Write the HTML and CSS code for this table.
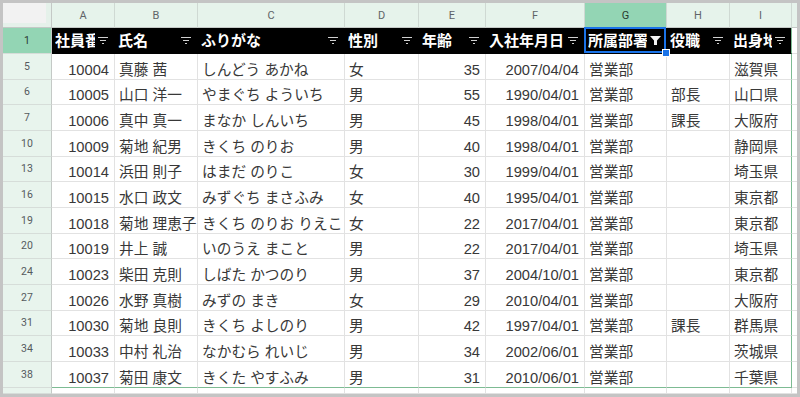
FILE: index.html
```html
<!DOCTYPE html>
<html lang="ja">
<head>
<meta charset="utf-8">
<title>Sheet</title>
<link rel="stylesheet" href="styles.css">
</head>
<body>
<div class="frame">
<div class="sheet">
  <div class="corner"><div class="corner-in"></div></div>
  <div class="ch">A</div><div class="ch">B</div><div class="ch">C</div><div class="ch">D</div><div class="ch">E</div><div class="ch">F</div><div class="ch sel">G</div><div class="ch">H</div><div class="ch">I</div><div class="ch end"></div>

  <div class="rh sel">1</div>
  <div class="hd"><span class="ht">社員番号</span><svg class="fi" width="10" height="7" viewBox="0 0 10 7"><path d="M0 .5h10M2 3.5h6M4 6.5h2" stroke="#d0d0d0" stroke-width="1"/></svg></div>
  <div class="hd"><span class="ht">氏名</span><svg class="fi" width="10" height="7" viewBox="0 0 10 7"><path d="M0 .5h10M2 3.5h6M4 6.5h2" stroke="#d0d0d0" stroke-width="1"/></svg></div>
  <div class="hd"><span class="ht">ふりがな</span><svg class="fi" width="10" height="7" viewBox="0 0 10 7"><path d="M0 .5h10M2 3.5h6M4 6.5h2" stroke="#d0d0d0" stroke-width="1"/></svg></div>
  <div class="hd"><span class="ht">性別</span><svg class="fi" width="10" height="7" viewBox="0 0 10 7"><path d="M0 .5h10M2 3.5h6M4 6.5h2" stroke="#d0d0d0" stroke-width="1"/></svg></div>
  <div class="hd"><span class="ht">年齢</span><svg class="fi" width="10" height="7" viewBox="0 0 10 7"><path d="M0 .5h10M2 3.5h6M4 6.5h2" stroke="#d0d0d0" stroke-width="1"/></svg></div>
  <div class="hd"><span class="ht">入社年月日</span><svg class="fi" width="10" height="7" viewBox="0 0 10 7"><path d="M0 .5h10M2 3.5h6M4 6.5h2" stroke="#d0d0d0" stroke-width="1"/></svg></div>
  <div class="hd active"><span class="ht">所属部署</span><svg class="ff" width="11" height="9" viewBox="0 0 11 9"><path d="M0 0h11L7 4.5V9H4V4.5Z" fill="#f2f2f2"/></svg><span class="selbox"></span><span class="handle"></span></div>
  <div class="hd"><span class="ht">役職</span><svg class="fi" width="10" height="7" viewBox="0 0 10 7"><path d="M0 .5h10M2 3.5h6M4 6.5h2" stroke="#d0d0d0" stroke-width="1"/></svg></div>
  <div class="hd ci"><span class="ht">出身地</span><svg class="fi" width="10" height="7" viewBox="0 0 10 7"><path d="M0 .5h10M2 3.5h6M4 6.5h2" stroke="#d0d0d0" stroke-width="1"/></svg></div>
  <div class="c end"></div>

  <div class="rh">5</div><div class="c n">10004</div><div class="c">真藤 茜</div><div class="c">しんどう あかね</div><div class="c">女</div><div class="c n">35</div><div class="c n">2007/04/04</div><div class="c">営業部</div><div class="c"></div><div class="c ci">滋賀県</div><div class="c end"></div>
  <div class="rh">6</div><div class="c n">10005</div><div class="c">山口 洋一</div><div class="c">やまぐち よういち</div><div class="c">男</div><div class="c n">55</div><div class="c n">1990/04/01</div><div class="c">営業部</div><div class="c">部長</div><div class="c ci">山口県</div><div class="c end"></div>
  <div class="rh">7</div><div class="c n">10006</div><div class="c">真中 真一</div><div class="c">まなか しんいち</div><div class="c">男</div><div class="c n">45</div><div class="c n">1998/04/01</div><div class="c">営業部</div><div class="c">課長</div><div class="c ci">大阪府</div><div class="c end"></div>
  <div class="rh">10</div><div class="c n">10009</div><div class="c">菊地 紀男</div><div class="c">きくち のりお</div><div class="c">男</div><div class="c n">40</div><div class="c n">1998/04/01</div><div class="c">営業部</div><div class="c"></div><div class="c ci">静岡県</div><div class="c end"></div>
  <div class="rh">13</div><div class="c n">10014</div><div class="c">浜田 則子</div><div class="c">はまだ のりこ</div><div class="c">女</div><div class="c n">30</div><div class="c n">1999/04/01</div><div class="c">営業部</div><div class="c"></div><div class="c ci">埼玉県</div><div class="c end"></div>
  <div class="rh">16</div><div class="c n">10015</div><div class="c">水口 政文</div><div class="c">みずぐち まさふみ</div><div class="c">女</div><div class="c n">40</div><div class="c n">1995/04/01</div><div class="c">営業部</div><div class="c"></div><div class="c ci">東京都</div><div class="c end"></div>
  <div class="rh">19</div><div class="c n">10018</div><div class="c">菊地 理恵子</div><div class="c">きくち のりお りえこ</div><div class="c">女</div><div class="c n">22</div><div class="c n">2017/04/01</div><div class="c">営業部</div><div class="c"></div><div class="c ci">東京都</div><div class="c end"></div>
  <div class="rh">20</div><div class="c n">10019</div><div class="c">井上 誠</div><div class="c">いのうえ まこと</div><div class="c">男</div><div class="c n">22</div><div class="c n">2017/04/01</div><div class="c">営業部</div><div class="c"></div><div class="c ci">埼玉県</div><div class="c end"></div>
  <div class="rh">24</div><div class="c n">10023</div><div class="c">柴田 克則</div><div class="c">しばた かつのり</div><div class="c">男</div><div class="c n">37</div><div class="c n">2004/10/01</div><div class="c">営業部</div><div class="c"></div><div class="c ci">東京都</div><div class="c end"></div>
  <div class="rh">27</div><div class="c n">10026</div><div class="c">水野 真樹</div><div class="c">みずの まき</div><div class="c">女</div><div class="c n">29</div><div class="c n">2010/04/01</div><div class="c">営業部</div><div class="c"></div><div class="c ci">大阪府</div><div class="c end"></div>
  <div class="rh">31</div><div class="c n">10030</div><div class="c">菊地 良則</div><div class="c">きくち よしのり</div><div class="c">男</div><div class="c n">42</div><div class="c n">1997/04/01</div><div class="c">営業部</div><div class="c">課長</div><div class="c ci">群馬県</div><div class="c end"></div>
  <div class="rh">34</div><div class="c n">10033</div><div class="c">中村 礼治</div><div class="c">なかむら れいじ</div><div class="c">男</div><div class="c n">34</div><div class="c n">2002/06/01</div><div class="c">営業部</div><div class="c"></div><div class="c ci">茨城県</div><div class="c end"></div>
  <div class="rh">38</div><div class="c n lr">10037</div><div class="c lr">菊田 康文</div><div class="c lr">きくた やすふみ</div><div class="c lr">男</div><div class="c n lr">31</div><div class="c n lr">2010/06/01</div><div class="c lr">営業部</div><div class="c lr"></div><div class="c ci lr">千葉県</div><div class="c end"></div>

  <div class="rh"></div><div class="c"></div><div class="c"></div><div class="c"></div><div class="c"></div><div class="c"></div><div class="c"></div><div class="c"></div><div class="c"></div><div class="c"></div><div class="c end"></div>
</div>
</div>
</body>
</html>
```

FILE: styles.css
```css
html, body {
  margin: 0;
  padding: 0;
  background: #ffffff;
}

.frame {
  width: 800px;
  height: 397px;
  box-sizing: border-box;
  border: 3px solid #c4c4c4;
  overflow: hidden;
  background: #ffffff;
}

.sheet {
  display: grid;
  grid-template-columns: 49px 63px 83px 147px 74px 67px 99px 82px 63px 62px 1fr;
  grid-template-rows: 25px 26px repeat(13, 25.67px) 1fr;
  width: 100%;
  height: 100%;
  font-family: "Liberation Sans", "Noto Sans CJK JP", sans-serif;
  font-size: 14.7px;
  color: #383838;
}

.corner {
  background: #e5f1ea;
  border-right: 1px solid #c4c9c6;
  border-bottom: 1px solid #c4c9c6;
  box-sizing: border-box;
  padding: 0 5px 4px 0;
}

.corner-in {
  width: 100%;
  height: 100%;
  background: #f2f2f2;
}

.ch {
  background: #e6f3eb;
  border-right: 1px solid #cfd9d3;
  border-bottom: 1px solid #c4c9c6;
  box-sizing: border-box;
  display: flex;
  align-items: center;
  justify-content: center;
  font-family: Roboto, "Liberation Sans", sans-serif;
  font-size: 11px;
  color: #5f6368;
  padding-top: 1px;
}

.ch.sel {
  background: #93d5b4;
  color: #2b3a31;
}

.ch.end {
  border-right: none;
}

.rh {
  background: #e8f4ed;
  border-right: 1px solid #c4c9c6;
  border-bottom: 1px solid #d6ddd9;
  box-sizing: border-box;
  display: flex;
  align-items: center;
  justify-content: center;
  font-family: Roboto, "Liberation Sans", sans-serif;
  font-size: 10.5px;
  color: #555a5e;
}

.rh.sel {
  background: #93d5b4;
  color: #2b3a31;
}

.hd {
  background: #000000;
  color: #ffffff;
  font-weight: bold;
  font-size: 15px;
  display: flex;
  align-items: center;
  gap: 3px;
  padding: 0 6px 0 3px;
  box-sizing: border-box;
  border-right: 1px solid #000000;
  border-bottom: 1px solid #000000;
  position: relative;
  min-width: 0;
}

.ht {
  flex: 1;
  min-width: 0;
  overflow: hidden;
  white-space: nowrap;
  line-height: 17px;
}

.fi, .ff {
  flex: none;
  display: block;
}

.ff {
  margin-right: -1px;
}

.selbox {
  position: absolute;
  left: -1px;
  top: -1px;
  right: 0;
  bottom: 0;
  border: 2px solid #1a73e8;
  pointer-events: none;
}

.handle {
  position: absolute;
  right: -4px;
  bottom: -4px;
  width: 6px;
  height: 6px;
  background: #1a73e8;
  border: 1px solid #ffffff;
  z-index: 2;
}

.c {
  border-right: 1px solid #e2e2e2;
  border-bottom: 1px solid #e2e2e2;
  box-sizing: border-box;
  display: flex;
  align-items: flex-end;
  padding: 0 4px;
  overflow: hidden;
  white-space: nowrap;
  line-height: 17px;
  min-width: 0;
}

.c.n {
  justify-content: flex-end;
  padding-right: 5px;
}

.ci {
  border-right-color: #7dbb93;
}

.hd.ci {
  border-right-color: #7dbb93;
}

.lr {
  border-bottom-color: #7dbb93;
}

.c.end {
  border-right: none;
}
```
